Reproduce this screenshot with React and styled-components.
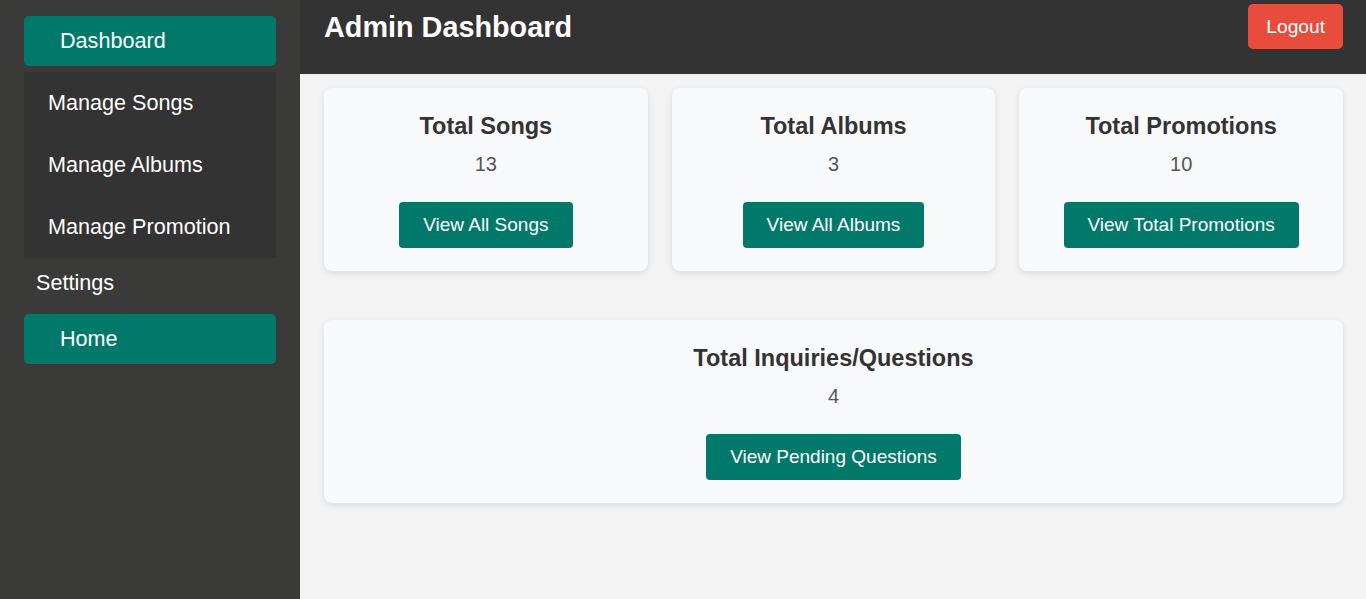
import React from "react";
import styled, { createGlobalStyle } from "styled-components";

const GlobalStyle = createGlobalStyle`
  * { box-sizing: border-box; }
  body {
    margin: 0;
    font-family: "Liberation Sans", Arial, sans-serif;
    background: #f3f3f3;
  }
`;

const stats = [
  { title: "Total Songs", count: 13, action: "View All Songs" },
  { title: "Total Albums", count: 3, action: "View All Albums" },
  { title: "Total Promotions", count: 10, action: "View Total Promotions" },
];

function App() {
  return (
    <Layout>
      <GlobalStyle />
      <Sidebar>
        <NavLink>Dashboard</NavLink>
        <SubMenu>
          <SubItem>Manage Songs</SubItem>
          <SubItem>Manage Albums</SubItem>
          <SubItem>Manage Promotion</SubItem>
        </SubMenu>
        <PlainItem>Settings</PlainItem>
        <NavLink>Home</NavLink>
      </Sidebar>
      <Main>
        <Header>
          <Title>Admin Dashboard</Title>
          <LogoutButton>Logout</LogoutButton>
        </Header>
        <Content>
          <CardRow>
            {stats.map((s) => (
              <Card key={s.title}>
                <CardTitle>{s.title}</CardTitle>
                <Count>{s.count}</Count>
                <ActionButton>{s.action}</ActionButton>
              </Card>
            ))}
          </CardRow>
          <Card>
            <CardTitle>Total Inquiries/Questions</CardTitle>
            <Count>4</Count>
            <ActionButton>View Pending Questions</ActionButton>
          </Card>
        </Content>
      </Main>
    </Layout>
  );
}

export default App;

const Layout = styled.div`
  display: flex;
  min-height: 599px;
`;

const Sidebar = styled.nav`
  width: 300px;
  flex-shrink: 0;
  background: #3a3b38;
  padding: 16px 24px;
  display: flex;
  flex-direction: column;
  color: #fff;
  font-size: 21.6px;
`;

const NavLink = styled.div`
  height: 50px;
  display: flex;
  align-items: center;
  padding-left: 36px;
  padding-bottom: 1px;
  background: #00796b;
  border-radius: 5px;
`;

const SubMenu = styled.div`
  margin-top: 6px;
  background: #333333;
  display: flex;
  flex-direction: column;
`;

const SubItem = styled.div`
  height: 62px;
  display: flex;
  align-items: center;
  padding-left: 24px;
`;

const PlainItem = styled.div`
  height: 56px;
  display: flex;
  align-items: center;
  padding-left: 12px;
  padding-bottom: 6px;
`;

const Main = styled.div`
  flex: 1;
  display: flex;
  flex-direction: column;
`;

const Header = styled.header`
  height: 74px;
  background: #333333;
  display: flex;
  justify-content: space-between;
  align-items: flex-start;
  padding: 4px 23px 0 24px;
`;

const Title = styled.h1`
  margin: 7px 0 0;
  color: #fff;
  font-size: 28.8px;
  font-weight: bold;
`;

const LogoutButton = styled.button`
  height: 45px;
  padding: 0 18px;
  border: none;
  border-radius: 5px;
  background: #e74c3c;
  color: #fff;
  font-family: inherit;
  font-size: 19.2px;
`;

const Content = styled.div`
  padding: 14px 23px 24px 24px;
  display: flex;
  flex-direction: column;
  gap: 49px;
`;

const CardRow = styled.div`
  display: grid;
  grid-template-columns: repeat(3, 1fr);
  gap: 24px;
`;

const Card = styled.div`
  background: #f8f9fa;
  border-radius: 8px;
  box-shadow: 0 2px 6px rgba(0, 0, 0, 0.1);
  padding: 25px 24px 23px;
  display: flex;
  flex-direction: column;
  align-items: center;
`;

const CardTitle = styled.h3`
  margin: 0 0 13px;
  color: #333;
  font-size: 23.5px;
  font-weight: bold;
`;

const Count = styled.p`
  margin: 0 0 26px;
  color: #555;
  font-size: 20px;
`;

const ActionButton = styled.button`
  height: 46px;
  padding: 0 24px;
  border: none;
  border-radius: 4px;
  background: #00796b;
  color: #fff;
  font-family: inherit;
  font-size: 19px;
`;
